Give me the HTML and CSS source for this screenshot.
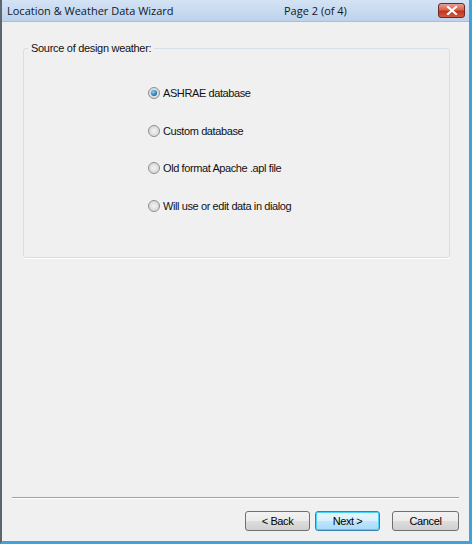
FILE: index.html
```html
<!DOCTYPE html>
<html>
<head>
    <meta charset="UTF-8">
    <title>Location &amp; Weather Data Wizard</title>
    <link rel="stylesheet" href="styles.css">
</head>
<body>
    <div class="window">
        <div class="titlebar">
            <div class="titlebar__name">Location &amp; Weather Data Wizard</div>
            <div class="titlebar__page">Page 2 (of 4)</div>
            <div class="titlebar__close">
                <svg width="12" height="9" viewBox="0 0 12 9">
                    <path d="M2 1 L10 8 M10 1 L2 8" stroke="#fff" stroke-width="2.2" stroke-linecap="square"/>
                </svg>
            </div>
        </div>
        <div class="client">
            <fieldset class="group">
                <legend class="group__title">Source of design weather:</legend>
                <div class="options">
                    <label class="option"><span class="radio radio--on"></span>ASHRAE database</label>
                    <label class="option"><span class="radio"></span>Custom database</label>
                    <label class="option"><span class="radio"></span>Old format Apache .apl file</label>
                    <label class="option"><span class="radio"></span>Will use or edit data in dialog</label>
                </div>
            </fieldset>
            <div class="spacer"></div>
            <div class="separator"></div>
            <div class="buttons">
                <button class="btn">&lt; Back</button>
                <button class="btn btn--default">Next &gt;</button>
                <button class="btn btn--cancel">Cancel</button>
            </div>
        </div>
    </div>
</body>
</html>
```

FILE: styles.css
```css
*, *::before, *::after {
    box-sizing: border-box;
}
html, body {
    margin: 0;
    padding: 0;
}
body {
    width: 472px;
    height: 544px;
    font-family: 'Liberation Sans', Arial, sans-serif;
    font-size: 10px;
    color: #111;
    background: #f0f0f0;
}
.window {
    width: 472px;
    height: 544px;
    display: flex;
    flex-direction: column;
    border-left: 2px solid #5c6670;
    border-right: 3px solid #3fa3d9;
    border-bottom: 3px solid #3fa3d9;
    background: #f0f0f0;
}
.titlebar {
    height: 22px;
    display: flex;
    align-items: center;
    padding: 0 4px 0 5px;
    background: linear-gradient(#d4e3f4, #bcd2ec);
    border-bottom: 1px solid #a9bfd6;
    font-family: 'Open Sans', 'Noto Sans', sans-serif;
    font-size: 11px;
    font-weight: 500;
    color: #0f1826;
}
.titlebar__name {
    width: 277px;
}
.titlebar__page {
    flex: 1;
}
.titlebar__close {
    width: 27px;
    height: 15px;
    display: flex;
    align-items: center;
    justify-content: center;
    border: 1px solid #6e2a22;
    border-radius: 3px;
    background: linear-gradient(#e8a092 0%, #d6644f 45%, #c3331c 55%, #d25a3e 100%);
}
.client {
    flex: 1;
    display: flex;
    flex-direction: column;
    padding: 0 10px;
}
.group {
    margin: 20px 9px 0 11px;
    padding: 0;
    height: 216px;
    border: 1px solid #d5dfe5;
    border-radius: 3px;
    box-shadow: 0 1px 0 #fff;
}
.group__title {
    margin-left: 4px;
    padding: 0 3px;
    font-size: 11px;
    letter-spacing: -0.3px;
}
.options {
    display: flex;
    flex-direction: column;
    gap: 25px;
    padding: 33px 0 0 124px;
}
.option {
    display: flex;
    align-items: center;
    gap: 3px;
    height: 12.5px;
    font-size: 11px;
    letter-spacing: -0.4px;
}
.radio {
    width: 12px;
    height: 12px;
    border-radius: 50%;
    border: 1px solid #8d8d8d;
    background: radial-gradient(circle at 50% 50%, #f4f4f4 0%, #dcdcdc 60%, #e8e8e8 100%);
    position: relative;
}
.radio--on::after {
    content: "";
    position: absolute;
    left: 2px;
    top: 2px;
    width: 6px;
    height: 6px;
    border-radius: 50%;
    background: radial-gradient(circle at 40% 35%, #8fd3f7 0%, #1d7ab8 60%, #0f4d80 100%);
}
.spacer {
    flex: 1;
}
.separator {
    height: 2px;
    border-top: 1px solid #a0a0a0;
    border-bottom: 1px solid #fff;
}
.buttons {
    display: flex;
    justify-content: flex-end;
    padding: 12px 0 10px 0;
}
.btn {
    width: 65px;
    height: 20px;
    margin-left: 5px;
    padding: 0;
    font-family: 'Liberation Sans', Arial, sans-serif;
    font-size: 11px;
    letter-spacing: -0.4px;
    color: #000;
    border: 1px solid #707070;
    border-radius: 3px;
    background: linear-gradient(#f2f2f2 0%, #ebebeb 48%, #dddddd 52%, #cfcfcf 100%);
}
.btn--default {
    border-color: #3c7fb1;
    background: linear-gradient(#eaf6fd 0%, #d9f0fc 48%, #bee6fd 52%, #a7d9f5 100%);
    box-shadow: inset 0 0 0 1px #48d4f8;
}
.btn--cancel {
    width: 67px;
    margin-left: 12px;
}
```
